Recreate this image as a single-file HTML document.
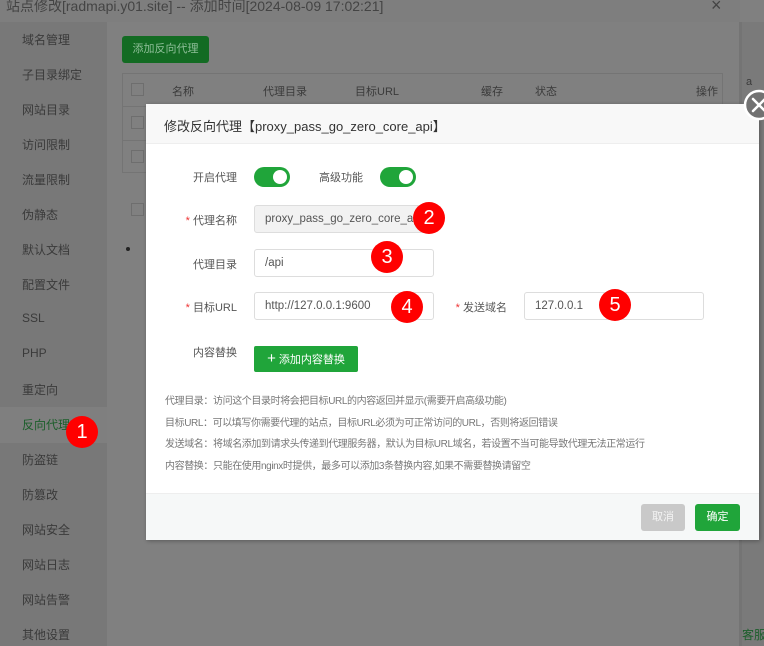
<!DOCTYPE html>
<html><head><meta charset="utf-8"><style>
*{box-sizing:border-box;margin:0;padding:0}
html,body{background:#808080}
body{width:764px;height:646px;overflow:hidden;font-family:"Liberation Sans","Noto Sans CJK SC",sans-serif;font-size:12px;color:#333;position:relative}
.abs{position:absolute;white-space:nowrap}
.side div{position:absolute;left:22px;font-size:12px;color:#3a3a3a}
.badge{position:absolute;width:32px;height:32px;border-radius:50%;background:#f00;color:#fff;font-size:20px;text-align:center;line-height:32px;font-family:"Liberation Sans",sans-serif}
.lbl{position:absolute;font-size:11px;color:#555;text-align:right;width:90px;white-space:nowrap}
.lbl b{color:#e33;font-weight:normal}
.inp{position:absolute;height:28px;border:1px solid #ddd;border-radius:3px;padding-left:10px;line-height:26px;font-size:11.5px;color:#555;background:#fff;overflow:hidden;white-space:nowrap}
.sw{position:absolute;width:36px;height:20px;border-radius:10px;background:#20a53a}
.sw:after{content:"";position:absolute;right:3px;top:3px;width:14px;height:14px;border-radius:50%;background:#fff}
.tip{position:absolute;left:165px;font-size:10px;letter-spacing:-0.4px;color:#777;white-space:nowrap}
</style></head><body>
<div class="abs" style="left:0;top:0;width:764px;height:646px;background:#808080"></div>
<div class="abs" style="left:0;top:0;width:740px;height:22px;background:#7e7e7e"></div>
<div class="abs" style="left:6px;top:-4px;font-size:14px;color:#444">站点修改[radmapi.y01.site] -- 添加时间[2024-08-09 17:02:21]</div>
<div class="abs" style="left:711px;top:-5px;font-size:18px;color:#444">×</div>
<div class="abs" style="left:0;top:22px;width:107px;height:624px;background:#787878"></div>
<div class="abs" style="left:0;top:407px;width:107px;height:36px;background:#7f7f7f"></div>
<div class="abs" style="left:740px;top:22px;width:24px;height:624px;background:#7a7a7a"></div>
<div class="abs" style="left:739px;top:22px;width:3px;height:624px;background:#747474"></div>
<div class="side">
<div style="top:31px">域名管理</div><div style="top:66px">子目录绑定</div><div style="top:101px">网站目录</div><div style="top:136px">访问限制</div><div style="top:171px">流量限制</div><div style="top:206px">伪静态</div><div style="top:241px">默认文档</div><div style="top:276px">配置文件</div><div style="top:311px">SSL</div><div style="top:346px">PHP</div><div style="top:381px">重定向</div><div style="top:416px;color:#1b5e2a">反向代理</div><div style="top:451px">防盗链</div><div style="top:486px">防篡改</div><div style="top:521px">网站安全</div><div style="top:556px">网站日志</div><div style="top:591px">网站告警</div><div style="top:626px">其他设置</div>
</div>
<div class="abs" style="left:122px;top:36px;width:87px;height:27px;background:#136b23;border-radius:3px;color:#8fbf99;font-size:11px;line-height:27px;text-align:center">添加反向代理</div>
<div class="abs" style="left:122px;top:73px;width:601px;height:100px;border:1px solid #747474"></div>
<div class="abs" style="left:122px;top:106px;width:601px;height:1px;background:#747474"></div>
<div class="abs" style="left:122px;top:140px;width:601px;height:1px;background:#747474"></div>
<div class="abs" style="left:131px;top:83px;width:13px;height:13px;border:1px solid #6e6e6e"></div>
<div class="abs" style="left:131px;top:116px;width:13px;height:13px;border:1px solid #6e6e6e"></div>
<div class="abs" style="left:131px;top:150px;width:13px;height:13px;border:1px solid #6e6e6e"></div>
<div class="abs" style="left:131px;top:203px;width:13px;height:13px;border:1px solid #6e6e6e"></div>
<div class="abs" style="left:126px;top:247px;width:4px;height:4px;border-radius:50%;background:#222"></div>
<div class="abs" style="top:83px;left:172px;font-size:11px;color:#3a3a3a">名称</div>
<div class="abs" style="top:83px;left:263px;font-size:11px;color:#3a3a3a">代理目录</div>
<div class="abs" style="top:83px;left:355px;font-size:11px;color:#3a3a3a">目标URL</div>
<div class="abs" style="top:83px;left:481px;font-size:11px;color:#3a3a3a">缓存</div>
<div class="abs" style="top:83px;left:535px;font-size:11px;color:#3a3a3a">状态</div>
<div class="abs" style="top:83px;left:696px;font-size:11px;color:#3a3a3a">操作</div>
<div class="abs" style="top:76px;left:746px;font-size:11px;color:#3a3a3a">a</div>
<div class="abs" style="top:626px;left:742px;font-size:12px;color:#1b5e2a">客服</div>

<div class="abs" style="left:146px;top:104px;width:613px;height:436px;background:#fff;box-shadow:1px 1px 4px rgba(0,0,0,.3)">
<div class="abs" style="left:0;top:0;width:613px;height:40px;background:#f8f8f8;border-bottom:1px solid #eee"></div>
<div class="abs" style="left:18px;top:12px;font-size:13px;color:#333">修改反向代理【proxy_pass_go_zero_core_api】</div>
<div class="abs" style="left:0;top:389px;width:613px;height:47px;background:#f6f8f8;border-top:1px solid #eee"></div>
<div class="abs" style="left:495px;top:400px;width:44px;height:27px;background:#c9c9c9;border-radius:3px;color:#f4f4f4;font-size:11px;text-align:center;line-height:27px">取消</div>
<div class="abs" style="left:549px;top:400px;width:45px;height:27px;background:#20a53a;border-radius:3px;color:#fff;font-size:11px;text-align:center;line-height:27px">确定</div>
</div>
<svg class="abs" style="left:743px;top:89px" width="32" height="32" viewBox="0 0 32 32"><circle cx="16" cy="16" r="14" fill="#727272" stroke="#fff" stroke-width="2.5"/><path d="M10 10L22 22M22 10L10 22" stroke="#fff" stroke-width="2.5" stroke-linecap="round"/></svg>

<div class="lbl" style="left:147px;top:169px">开启代理</div>
<div class="sw" style="left:254px;top:167px"></div>
<div class="lbl" style="left:273px;top:169px">高级功能</div>
<div class="sw" style="left:380px;top:167px"></div>
<div class="lbl" style="left:147px;top:212px"><b>*</b> 代理名称</div>
<div class="inp" style="left:254px;top:205px;width:180px;background:#f2f2f2">proxy_pass_go_zero_core_api</div>
<div class="lbl" style="left:147px;top:256px">代理目录</div>
<div class="inp" style="left:254px;top:249px;width:180px">/api</div>
<div class="lbl" style="left:147px;top:299px"><b>*</b> 目标URL</div>
<div class="inp" style="left:254px;top:292px;width:180px">http://127.0.0.1:9600</div>
<div class="lbl" style="left:417px;top:299px"><b>*</b> 发送域名</div>
<div class="inp" style="left:524px;top:292px;width:180px">127.0.0.1</div>
<div class="lbl" style="left:147px;top:344px">内容替换</div>
<div class="abs" style="left:254px;top:346px;width:104px;height:26px;background:#20a53a;border-radius:2px;color:#fff;font-size:11px;line-height:26px;text-align:center"><span style="font-size:15px">+</span> 添加内容替换</div>
<div class="tip" style="top:392px">代理目录：访问这个目录时将会把目标URL的内容返回并显示(需要开启高级功能)</div>
<div class="tip" style="top:414px">目标URL：可以填写你需要代理的站点，目标URL必须为可正常访问的URL，否则将返回错误</div>
<div class="tip" style="top:435px">发送域名：将域名添加到请求头传递到代理服务器，默认为目标URL域名，若设置不当可能导致代理无法正常运行</div>
<div class="tip" style="top:457px">内容替换：只能在使用nginx时提供，最多可以添加3条替换内容,如果不需要替换请留空</div>

<div class="badge" style="left:66px;top:416px">1</div>
<div class="badge" style="left:413px;top:202px">2</div>
<div class="badge" style="left:371px;top:241px">3</div>
<div class="badge" style="left:391px;top:291px">4</div>
<div class="badge" style="left:599px;top:289px">5</div>
</body></html>
